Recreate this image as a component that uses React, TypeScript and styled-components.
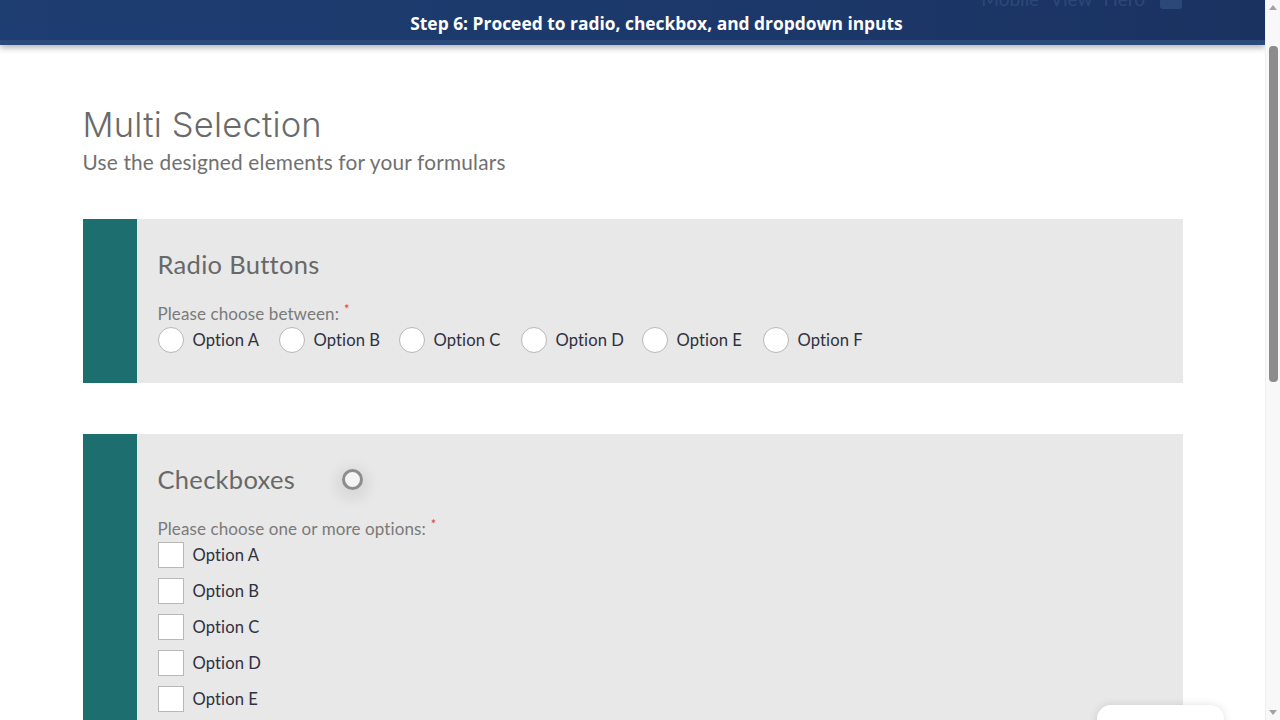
import React from "react";
import styled, { createGlobalStyle } from "styled-components";

const Global = createGlobalStyle`
  html, body { margin: 0; padding: 0; height: 100%; overflow: hidden; background: #fff; }
  #root { height: 100%; }
  * { box-sizing: border-box; }
`;

const Shell = styled.div`
  display: flex;
  height: 720px;
  width: 1280px;
  position: relative;
  font-family: "Lato", "Liberation Sans", sans-serif;
`;

const Page = styled.div`
  flex: 1;
  display: flex;
  flex-direction: column;
  overflow: hidden;
  position: relative;
`;

const TopBar = styled.header`
  position: relative;
  height: 45px;
  flex: none;
  background: linear-gradient(90deg, #1e3d71 0%, #1c386a 60%, #1a3260 100%);
  border-bottom: 5px solid #2d4a7c;
  box-shadow: 0 3px 6px rgba(0, 0, 0, 0.28);
  display: flex;
  align-items: center;
  justify-content: center;
  padding-left: 48px;
  padding-top: 5px;
  z-index: 2;
  overflow: hidden;
`;

const StepTitle = styled.div`
  font-family: "Open Sans", "Noto Sans", sans-serif;
  font-weight: 700;
  font-size: 17.4px;
  color: #fff;
`;

const GhostNav = styled.div`
  position: absolute;
  right: 83px;
  top: -13px;
  display: flex;
  align-items: center;
  gap: 11px;
  font-family: "Lato", sans-serif;
  font-size: 19px;
  color: #2c4878;
`;

const GhostIcon = styled.span`
  display: inline-block;
  width: 22px;
  height: 20px;
  border-radius: 3px;
  background: #2c4878;
  margin-left: 4px;
`;

const Content = styled.main`
  width: 1100px;
  margin: 0 auto;
  padding-top: 58px;
  display: flex;
  flex-direction: column;
`;

const Title = styled.h1`
  margin: 0;
  font-family: "Inter", "Lato", sans-serif;
  font-weight: 300;
  font-size: 34.5px;
  line-height: 44px;
  color: #6a6a6a;
  letter-spacing: 0.2px;
`;

const Subtitle = styled.p`
  margin: 0;
  font-size: 20.8px;
  line-height: 30px;
  color: #707070;
  letter-spacing: 0.2px;
`;

const Card = styled.section<{ $mt: number }>`
  margin-top: ${(p) => p.$mt}px;
  display: flex;
  background: #e8e8e8;
`;

const Band = styled.div`
  width: 54px;
  flex: none;
  background: #1d6f6f;
`;

const CardBody = styled.div`
  flex: 1;
  padding: 30px 20px 30px 21px;
`;

const CardHeading = styled.h2`
  margin: 0;
  display: flex;
  align-items: center;
  font-weight: 400;
  font-size: 25.5px;
  line-height: 30px;
  color: #686868;
  letter-spacing: 0.3px;
`;

const Spinner = styled.span`
  display: inline-block;
  width: 21px;
  height: 21px;
  margin-left: 47px;
  border-radius: 50%;
  border: 3px solid #8d8d8d;
  background: #f4f4f4;
  box-shadow: 0 4px 14px 6px rgba(0, 0, 0, 0.07);
`;

const FieldLabel = styled.div`
  margin-top: 20px;
  font-size: 17px;
  line-height: 20px;
  color: #7a7a7a;
  letter-spacing: 0.1px;
`;

const Req = styled.sup`
  color: #e03a3a;
  font-size: 13px;
  margin-left: 5px;
  vertical-align: 6px;
`;

const RadioRow = styled.div`
  display: flex;
  margin-top: 3px;
`;

const OptionItem = styled.label<{ $w?: number }>`
  display: flex;
  align-items: center;
  gap: 9px;
  width: ${(p) => (p.$w ? `${p.$w}px` : "auto")};
  font-size: 16.6px;
  color: #2f3140;
  letter-spacing: 0.1px;
`;

const RadioDot = styled.span`
  width: 26px;
  height: 26px;
  flex: none;
  border-radius: 50%;
  background: #fff;
  border: 1px solid #b8b8b8;
`;

const CheckList = styled.div`
  display: flex;
  flex-direction: column;
  gap: 10px;
  margin-top: 3px;
`;

const CheckBox = styled.span`
  width: 26px;
  height: 26px;
  flex: none;
  background: #fff;
  border: 1px solid #b8b8b8;
`;

const ScrollTrack = styled.div`
  width: 15px;
  flex: none;
  background: #f8f8f8;
  border-left: 1px solid #efefef;
  display: flex;
  flex-direction: column;
  align-items: center;
`;

const Arrow = styled.div<{ $down?: boolean }>`
  width: 15px;
  height: 15px;
  flex: none;
  display: flex;
  align-items: center;
  justify-content: center;
  &::before {
    content: "";
    border-left: 4.5px solid transparent;
    border-right: 4.5px solid transparent;
    ${(p) =>
      p.$down ? "border-top: 5px solid #a3a3a3;" : "border-bottom: 5px solid #a3a3a3;"}
  }
`;

const Thumb = styled.div`
  width: 9px;
  height: 336px;
  margin-top: 31px;
  border-radius: 4px;
  background: #8c8c8c;
`;

const Spacer = styled.div`
  flex: 1;
`;

const ChatBubble = styled.div`
  position: absolute;
  left: 1097px;
  top: 705px;
  width: 127px;
  height: 40px;
  border-radius: 14px;
  background: #fff;
  box-shadow: 0 0 8px rgba(0, 0, 0, 0.12);
  z-index: 3;
`;

const radios = [
  { t: "Option A", w: 121 },
  { t: "Option B", w: 120 },
  { t: "Option C", w: 122 },
  { t: "Option D", w: 121 },
  { t: "Option E", w: 121 },
  { t: "Option F" },
];

const checks = ["Option A", "Option B", "Option C", "Option D", "Option E", "Option F"];

export default function App() {
  return (
    <>
      <Global />
      <Shell>
        <Page>
          <TopBar>
            <GhostNav>
              <span>Mobile</span>
              <span>View</span>
              <span>Hero</span>
              <GhostIcon />
            </GhostNav>
            <StepTitle>Step 6: Proceed to radio, checkbox, and dropdown inputs</StepTitle>
          </TopBar>
          <Content>
            <Title>Multi Selection</Title>
            <Subtitle>Use the designed elements for your formulars</Subtitle>

            <Card $mt={42}>
              <Band />
              <CardBody>
                <CardHeading>Radio Buttons</CardHeading>
                <FieldLabel>
                  Please choose between:<Req>*</Req>
                </FieldLabel>
                <RadioRow>
                  {radios.map((r) => (
                    <OptionItem key={r.t} $w={r.w}>
                      <RadioDot />
                      {r.t}
                    </OptionItem>
                  ))}
                </RadioRow>
              </CardBody>
            </Card>

            <Card $mt={51}>
              <Band />
              <CardBody>
                <CardHeading>
                  Checkboxes
                  <Spinner />
                </CardHeading>
                <FieldLabel>
                  Please choose one or more options:<Req>*</Req>
                </FieldLabel>
                <CheckList>
                  {checks.map((c) => (
                    <OptionItem key={c}>
                      <CheckBox />
                      {c}
                    </OptionItem>
                  ))}
                </CheckList>
              </CardBody>
            </Card>
          </Content>
        </Page>
        <ScrollTrack>
          <Arrow />
          <Thumb />
          <Spacer />
          <Arrow $down />
        </ScrollTrack>
        <ChatBubble />
      </Shell>
    </>
  );
}
